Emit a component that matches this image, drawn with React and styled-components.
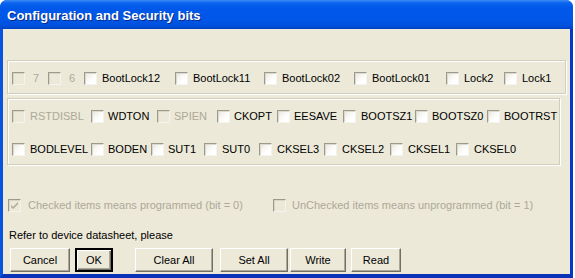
import React from "react";
import styled, { createGlobalStyle } from "styled-components";

const Global = createGlobalStyle`
  html, body { margin: 0; padding: 0; background: #ffffff; }
  body { font-family: "Liberation Sans", Arial, sans-serif; font-size: 11px; color: #000; }
  * { box-sizing: border-box; }
`;

const Window = styled.div`
  width: 573px;
  height: 278px;
  display: flex;
  flex-direction: column;
  border-radius: 7px 7px 0 0;
  overflow: hidden;
  background: #0a4fd9;
`;

const TitleBar = styled.div`
  height: 29px;
  flex: none;
  display: flex;
  align-items: center;
  padding: 1px 0 0 7px;
  color: #fff;
  font-weight: bold;
  font-size: 13px;
  text-shadow: 1px 1px 0 #0a2a8a;
  background: linear-gradient(
    to bottom,
    #3d8cf6 0px,
    #0a63ee 3px,
    #0058ea 8px,
    #0056e6 20px,
    #0050dc 26px,
    #0042c0 29px
  );
`;

const Frame = styled.div`
  flex: 1;
  display: flex;
  border-left: 3px solid #0854e0;
  border-right: 3px solid #0638c8;
  border-bottom: 4px solid #0a33b8;
`;

const Client = styled.div`
  flex: 1;
  background: #ece9d8;
  display: flex;
  flex-direction: column;
  padding-left: 4px;
`;

const Group = styled.div`
  width: ${(p) => p.$w}px;
  margin-top: ${(p) => p.$mt}px;
  padding: 11px 0 0 4px;
  border: 1px solid #d0cdbd;
  box-shadow: inset 1px 1px 0 #ffffff, 1px 1px 0 #ffffff;
  display: flex;
  flex-direction: column;
  gap: ${(p) => p.$gap || 0}px;
  height: ${(p) => p.$h}px;
`;

const Row = styled.div`
  display: flex;
  align-items: center;
  height: 13px;
  margin-top: ${(p) => p.$mt || 0}px;
  padding-left: ${(p) => p.$pl || 0}px;
`;

const Item = styled.label`
  display: flex;
  align-items: center;
  flex: none;
  width: ${(p) => (p.$w ? `${p.$w}px` : "auto")};
  gap: ${(p) => p.$gap || 5}px;
  color: ${(p) => (p.$disabled ? "#aca899" : "#000")};
  white-space: nowrap;
  line-height: 13px;
`;

const Box = styled.span`
  width: 13px;
  height: 13px;
  flex: none;
  position: relative;
  border: 1px solid;
  border-color: #9c9a8c #f4f3ee #f4f3ee #9c9a8c;
  background: ${(p) =>
    p.$disabled
      ? "#ece9d8"
      : "linear-gradient(135deg, #e4e2d6 0%, #f6f5f0 35%, #ffffff 70%)"};
  box-shadow: inset 1px 1px 0 ${(p) => (p.$disabled ? "#d8d5c6" : "#dcdad0")};
`;

const CheckMark = styled.svg`
  position: absolute;
  left: 1px;
  top: 1px;
`;

const Note = styled.div`
  margin-top: ${(p) => p.$mt}px;
  padding-left: 2px;
  line-height: 13px;
`;

const ButtonBar = styled.div`
  display: flex;
  margin-top: 6px;
  padding-left: 3px;
`;

const Button = styled.button`
  width: ${(p) => p.$w}px;
  height: 24px;
  margin-left: ${(p) => p.$ml || 0}px;
  padding: 0;
  font-family: "Liberation Sans", Arial, sans-serif;
  font-size: 11px;
  color: #000;
  background: #ece9d8;
  border: 1px solid;
  border-color: #ffffff #716f64 #716f64 #ffffff;
  box-shadow: inset -1px -1px 0 #aca899;
  outline: ${(p) => (p.$default ? "1px solid #000" : "none")};
  outline-offset: ${(p) => (p.$default ? "0" : "0")};
  ${(p) =>
    p.$default &&
    `
    border: 2px solid;
    border-color: #000;
    box-shadow: inset 1px 1px 0 #ffffff, inset -1px -1px 0 #716f64, inset -2px -2px 0 #aca899;
    outline: none;
  `}
`;

function Check({ label, w, gap, disabled, checked }) {
  return (
    <Item $w={w} $gap={gap} $disabled={disabled}>
      <Box $disabled={disabled}>
        {checked && (
          <CheckMark width="9" height="9" viewBox="0 0 9 9">
            <path
              d="M1 4 L3 6 L8 1 L8 3 L3 8 L1 6 Z"
              fill={disabled ? "#aca899" : "#21a121"}
            />
          </CheckMark>
        )}
      </Box>
      {label}
    </Item>
  );
}

const row1 = [
  { label: "7", w: 36, gap: 8, disabled: true },
  { label: "6", w: 36, gap: 8, disabled: true },
  { label: "BootLock12", w: 91 },
  { label: "BootLock11", w: 89 },
  { label: "BootLock02", w: 90 },
  { label: "BootLock01", w: 92 },
  { label: "Lock2", w: 58 },
  { label: "Lock1" },
];

const row2 = [
  { label: "RSTDISBL", w: 79, disabled: true },
  { label: "WDTON", w: 66, gap: 4 },
  { label: "SPIEN", w: 60, gap: 4, disabled: true },
  { label: "CKOPT", w: 60, gap: 4 },
  { label: "EESAVE", w: 66, gap: 4 },
  { label: "BOOTSZ1", w: 72 },
  { label: "BOOTSZ0", w: 72, gap: 4 },
  { label: "BOOTRST", gap: 4 },
];

const row3 = [
  { label: "BODLEVEL", w: 79 },
  { label: "BODEN", w: 60, gap: 4 },
  { label: "SUT1", w: 53, gap: 4 },
  { label: "SUT0", w: 55 },
  { label: "CKSEL3", w: 65 },
  { label: "CKSEL2", w: 66 },
  { label: "CKSEL1", w: 66 },
  { label: "CKSEL0" },
];

const renderRow = (items) =>
  items.map((it) => <Check key={it.label} {...it} />);

export default function App() {
  return (
    <>
      <Global />
      <Window>
        <TitleBar>Configuration and Security bits</TitleBar>
        <Frame>
          <Client>
            <Group $w={559} $mt={31} $h={34}>
              <Row>{renderRow(row1)}</Row>
            </Group>
            <Group $w={553} $mt={4} $h={67} $gap={20}>
              <Row>{renderRow(row2)}</Row>
              <Row>{renderRow(row3)}</Row>
            </Group>
            <Row $mt={34} $pl={1}>
              <Check
                label="Checked items means programmed (bit = 0)"
                w={265}
                gap={7}
                disabled
                checked
              />
              <Check
                label="UnChecked items means unprogrammed (bit = 1)"
                gap={6}
                disabled
              />
            </Row>
            <Note $mt={17}>Refer to device datasheet, please</Note>
            <ButtonBar>
              <Button $w={60}>Cancel</Button>
              <Button $w={38} $ml={5} $default>
                OK
              </Button>
              <Button $w={78} $ml={22}>Clear All</Button>
              <Button $w={68} $ml={7}>Set All</Button>
              <Button $w={56} $ml={2}>Write</Button>
              <Button $w={50} $ml={5}>Read</Button>
            </ButtonBar>
          </Client>
        </Frame>
      </Window>
    </>
  );
}
